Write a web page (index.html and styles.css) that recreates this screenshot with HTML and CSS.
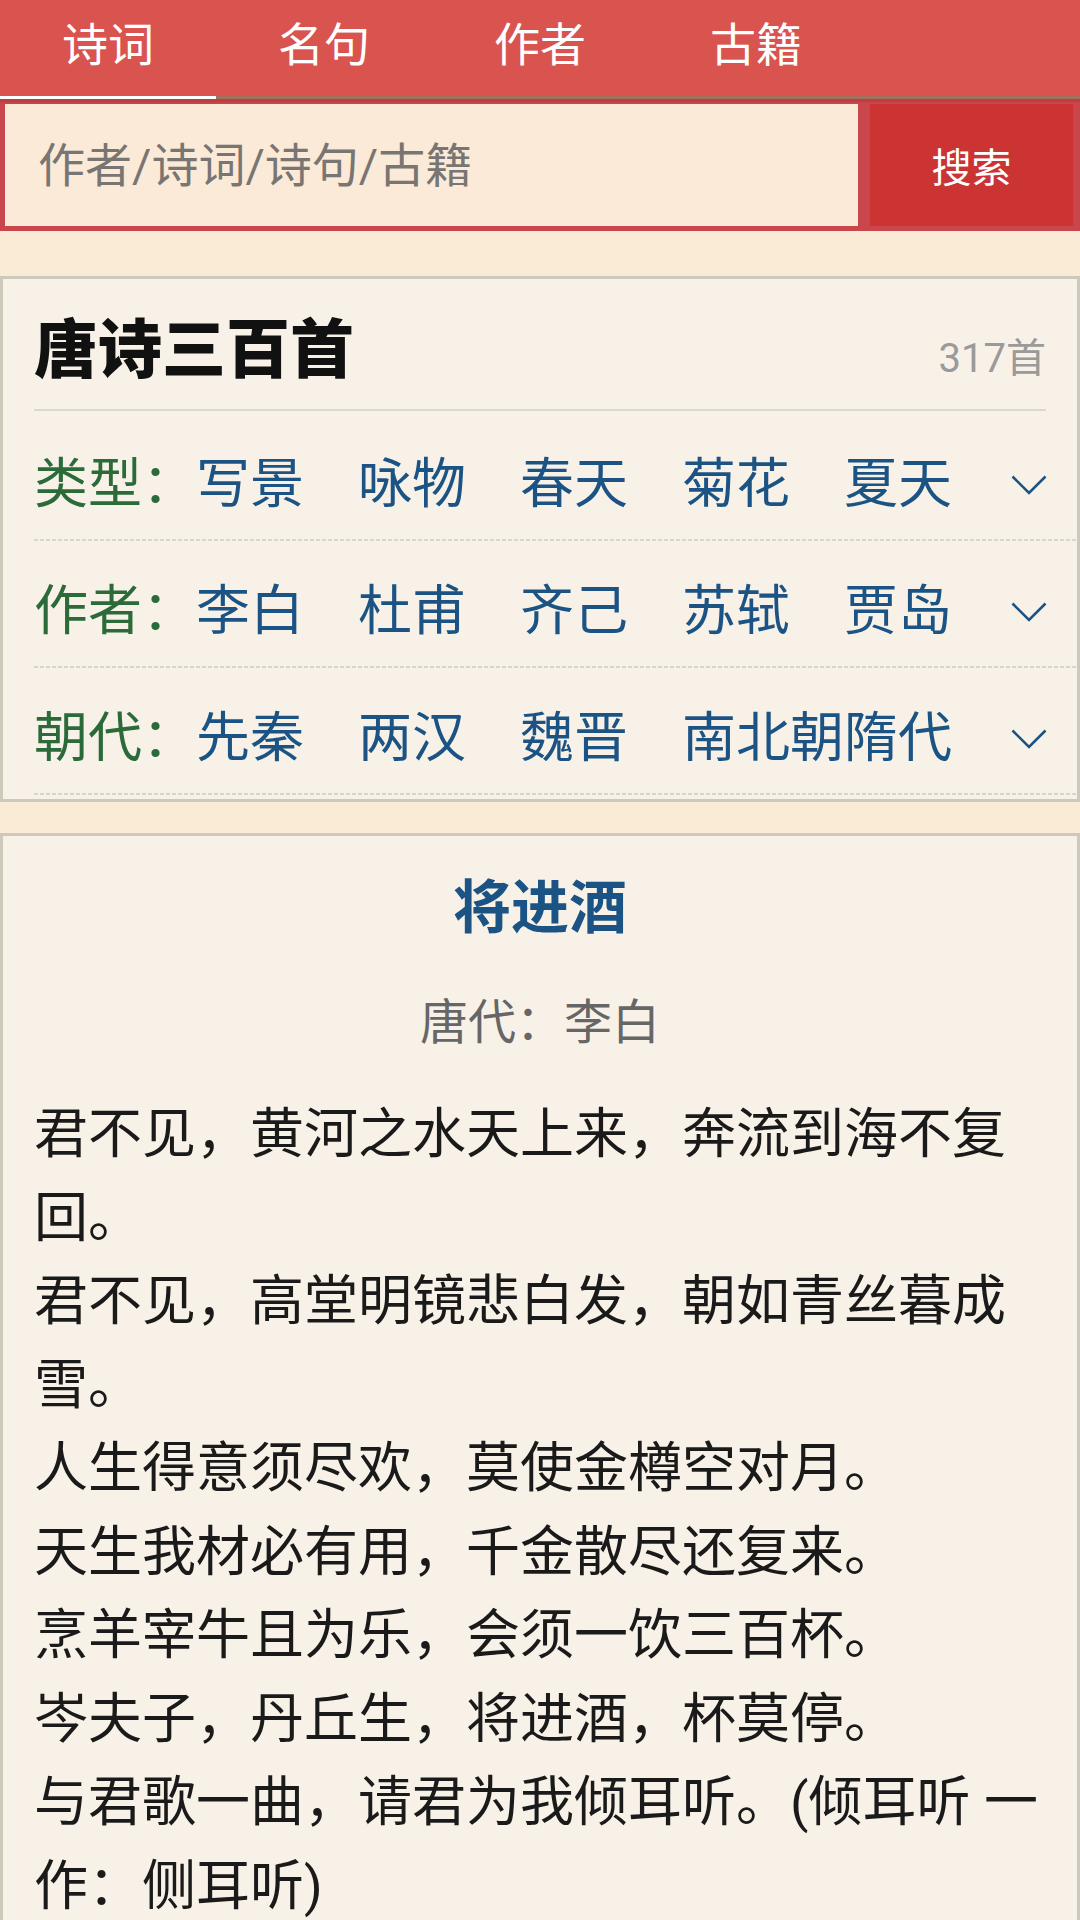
FILE: index.html
```html
<!DOCTYPE html>
<html lang="zh-CN">
<head>
<meta charset="utf-8">
<title>唐诗三百首</title>
<link rel="stylesheet" href="styles.css">
</head>
<body>
<div class="page">
  <nav class="tabs">
    <div class="tab active">诗词</div>
    <div class="tab">名句</div>
    <div class="tab">作者</div>
    <div class="tab">古籍</div>
    <div class="tab"></div>
  </nav>

  <form class="search">
    <input class="search-input" type="text" placeholder="作者/诗词/诗句/古籍">
    <button class="search-btn" type="button">搜索</button>
  </form>

  <section class="card filter-card">
    <header class="filter-head">
      <h1 class="filter-title">唐诗三百首</h1>
      <span class="count">317首</span>
    </header>
    <div class="filter-row first">
      <span class="label">类型：</span>
      <a class="tag">写景</a><a class="tag">咏物</a><a class="tag">春天</a><a class="tag">菊花</a><a class="tag">夏天</a>
      <svg class="chev" viewBox="0 0 36 20" width="36" height="20"><polyline points="1.5,1.5 18,18 34.5,1.5"/></svg>
    </div>
    <div class="filter-row">
      <span class="label">作者：</span>
      <a class="tag">李白</a><a class="tag">杜甫</a><a class="tag">齐己</a><a class="tag">苏轼</a><a class="tag">贾岛</a>
      <svg class="chev" viewBox="0 0 36 20" width="36" height="20"><polyline points="1.5,1.5 18,18 34.5,1.5"/></svg>
    </div>
    <div class="filter-row">
      <span class="label">朝代：</span>
      <a class="tag">先秦</a><a class="tag">两汉</a><a class="tag">魏晋</a><a class="tag">南北朝隋代</a>
      <svg class="chev" viewBox="0 0 36 20" width="36" height="20"><polyline points="1.5,1.5 18,18 34.5,1.5"/></svg>
    </div>
  </section>

  <article class="card poem">
    <h2 class="poem-title">将进酒</h2>
    <p class="poem-author">唐代：李白</p>
    <div class="poem-body">
      <p>君不见，黄河之水天上来，奔流到海不复回。</p>
      <p>君不见，高堂明镜悲白发，朝如青丝暮成雪。</p>
      <p>人生得意须尽欢，莫使金樽空对月。</p>
      <p>天生我材必有用，千金散尽还复来。</p>
      <p>烹羊宰牛且为乐，会须一饮三百杯。</p>
      <p>岑夫子，丹丘生，将进酒，杯莫停。</p>
      <p>与君歌一曲，请君为我倾耳听。(倾耳听 一作：侧耳听)</p>
    </div>
  </article>
</div>
</body>
</html>
```

FILE: styles.css
```css
* {
  box-sizing: border-box;
}

html,
body {
  margin: 0;
  padding: 0;
}

body {
  background: #faebd7;
  font-family: Roboto, "Noto Sans CJK SC", sans-serif;
}

.page {
  height: 1920px;
  overflow: hidden;
  background: #faebd7;
}

/* ---------- tabs ---------- */
.tabs {
  display: grid;
  grid-template-columns: repeat(5, 216px);
  background: #d9534f;
}

.tab {
  height: 99px;
  padding-bottom: 6px;
  line-height: 90px;
  border-bottom: 3px solid #a4705e;
  color: #fff;
  font-size: 46px;
  text-align: center;
}

.tab.active {
  border-bottom-color: #ffffff;
}

/* ---------- search ---------- */
.search {
  display: flex;
  gap: 12px;
  margin: 0 0 45px;
  padding: 5px 7px 5px 5px;
  background: #c9474c;
  box-shadow: inset 0 4px 2px -1px rgba(80, 0, 0, 0.12);
}

.search-input {
  flex: 1;
  min-width: 0;
  height: 122px;
  margin: 0;
  padding: 0 0 0 33px;
  border: 0;
  outline: none;
  background: #fbead7;
  color: #333;
  font-family: Roboto, "Noto Sans CJK SC", sans-serif;
  font-size: 47px;
}

.search-input::placeholder {
  color: #787572;
}

.search-btn {
  width: 203px;
  height: 122px;
  margin: 0;
  padding: 0;
  border: 0;
  background: #cc3333;
  color: #fff;
  font-family: Roboto, "Noto Sans CJK SC", sans-serif;
  font-size: 40px;
}

/* ---------- cards ---------- */
.card {
  background: #f8f1e7;
  border: 3px solid #cdcabb;
}

.filter-card {
  margin-bottom: 31px;
  padding-bottom: 4px;
}

.filter-head {
  display: flex;
  justify-content: space-between;
  align-items: baseline;
  margin: 0 31px;
  padding: 40px 0 26px;
  border-bottom: 2px solid #dcd8cc;
}

.filter-title {
  margin: 0;
  font-size: 64px;
  line-height: 64px;
  font-weight: 900;
  color: #111;
}

.count {
  font-size: 40px;
  line-height: 40px;
  color: #9a9a9a;
}

.filter-row {
  display: flex;
  align-items: center;
  height: 127px;
  margin-left: 31px;
  padding: 44px 0 29px;
  font-size: 54px;
  line-height: 54px;
  background: repeating-linear-gradient(90deg, #d9d5c9 0 4px, transparent 4px 6px) left bottom / 100% 2px no-repeat;
}

.filter-row.first {
  margin-top: 3px;
}

.label {
  color: #2b6a39;
}

.tag {
  margin-right: 54px;
  color: #1b5384;
}

.chev {
  margin: 0 30px 0 auto;
  fill: none;
  stroke: #1b5384;
  stroke-width: 2.6;
}

/* ---------- poem ---------- */
.poem {
  padding: 43px 31px 40px;
}

.poem-title {
  margin: 0;
  font-size: 58px;
  line-height: 58px;
  font-weight: 700;
  color: #1b5384;
  text-align: center;
}

.poem-author {
  margin: 62px 0 0;
  font-size: 48px;
  line-height: 48px;
  color: #666;
  text-align: center;
}

.poem-body {
  margin-top: 46px;
  font-size: 54px;
  line-height: 83.5px;
  color: #1a1a1a;
}

.poem-body p {
  margin: 0;
}
```
